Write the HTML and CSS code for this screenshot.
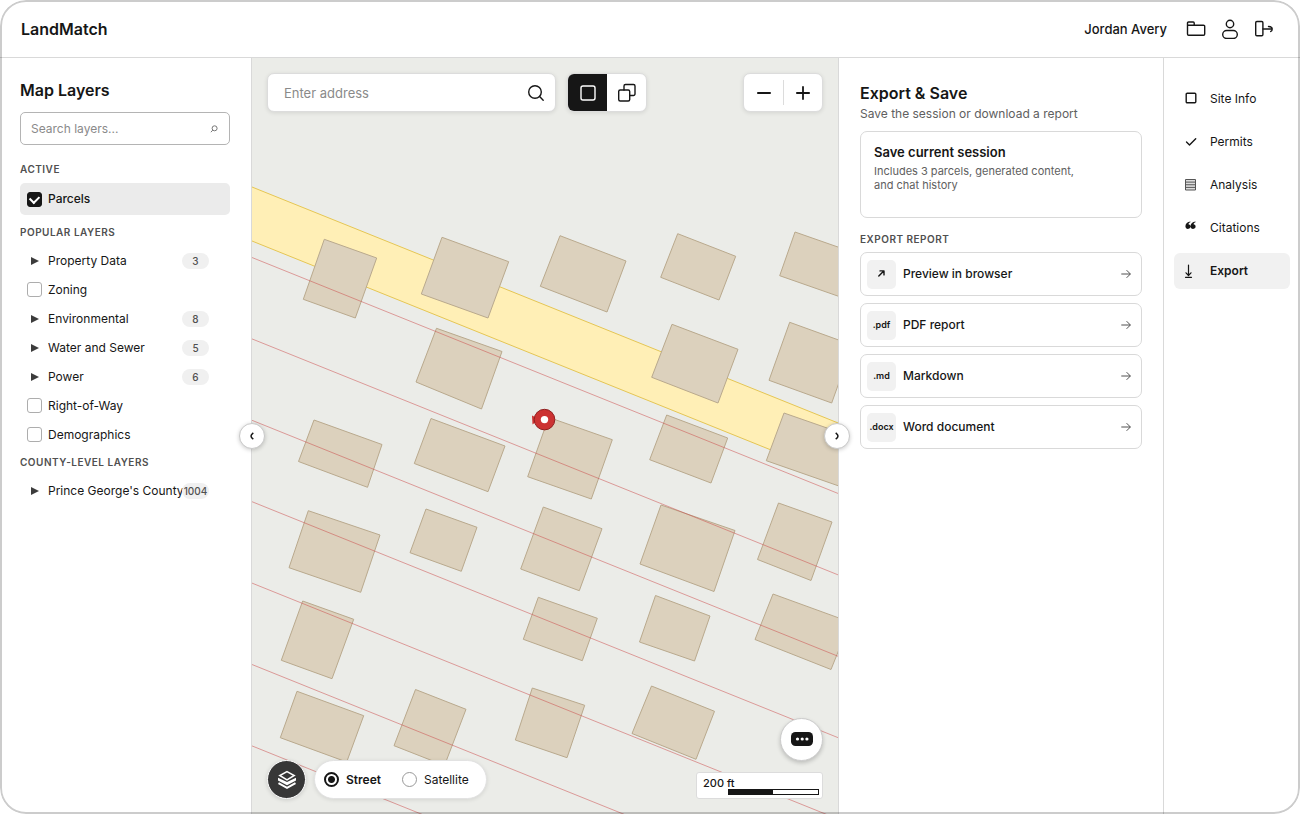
FILE: index.html
```html
<!DOCTYPE html>
<html lang="en">
<head>
<meta charset="utf-8">
<title>LandMatch</title>
<link rel="stylesheet" href="styles.css">
</head>
<body>
<div class="app">
  <header class="topbar">
    <h1 class="brand">LandMatch</h1>
    <div class="account">
      <span class="user-name">Jordan Avery</span>
      <button class="icon-btn" aria-label="Projects">
        <svg width="20" height="20" viewBox="0 0 20 20" class="line"><path d="M1.500 6.200V4a1 1 0 0 1 1-1h4.700a1 1 0 0 1 1 1v2.200M2.500 6.200h15a1.200 1.200 0 0 1 1.200 1.200v7.700a1.200 1.200 0 0 1-1.200 1.200h-14.800a1.200 1.200 0 0 1-1.200-1.200V6.200z"/></svg>
      </button>
      <button class="icon-btn" aria-label="Profile">
        <svg width="20" height="20" viewBox="0 0 20 20" class="line"><circle cx="10" cy="5" r="3.700"/><rect x="2.700" y="11.500" width="14.600" height="8" rx="4"/></svg>
      </button>
      <button class="icon-btn" aria-label="Sign out">
        <svg width="20" height="20" viewBox="0 0 20 20" class="line"><rect x="1.700" y="2.500" width="7.200" height="14.200" rx="1.200"/><path d="M9 10h9M14.500 7.500q3.700.2 3.700 2.500t-1.500 2.500"/></svg>
      </button>
    </div>
  </header>

  <main class="workspace">
    <aside class="sidebar">
      <h2 class="title">Map Layers</h2>
      <div class="layer-search">
        <input type="search" placeholder="Search layers..." aria-label="Search layers">
        <svg width="8" height="8" viewBox="0 0 8 8"><circle cx="4.600" cy="3.300" r="2.500"/><path d="M2.800 5.100L.9 7.200"/></svg>
      </div>

      <h3 class="section">Active</h3>
      <label class="layer layer-active"><input type="checkbox" class="check" checked><span class="layer-name">Parcels</span></label>

      <h3 class="section">Popular Layers</h3>
      <div class="layer-list">
        <button class="layer"><span class="caret"></span><span class="layer-name">Property Data</span><span class="count">3</span></button>
        <label class="layer"><input type="checkbox" class="check"><span class="layer-name">Zoning</span></label>
        <button class="layer"><span class="caret"></span><span class="layer-name">Environmental</span><span class="count">8</span></button>
        <button class="layer"><span class="caret"></span><span class="layer-name">Water and Sewer</span><span class="count">5</span></button>
        <button class="layer"><span class="caret"></span><span class="layer-name">Power</span><span class="count">6</span></button>
        <label class="layer"><input type="checkbox" class="check"><span class="layer-name">Right-of-Way</span></label>
        <label class="layer"><input type="checkbox" class="check"><span class="layer-name">Demographics</span></label>
      </div>

      <h3 class="section">County-Level Layers</h3>
      <div class="layer-list">
        <button class="layer"><span class="caret"></span><span class="layer-name">Prince George's County</span><span class="count">1004</span></button>
      </div>
    </aside>

    <section class="map" aria-label="Map">
      <svg class="map-canvas" aria-hidden="true">
        <g transform="translate(-252 -58)">
          <path class="road" d="M212 170.900L1052 509.100V563.100L212 224.900Z"/>
          <g class="buildings">
            <path d="M324.300 239.300L376.700 258L355.300 318L303.300 299.300Z"/>
            <path d="M442 237.300L508.700 261.700L488 318L421.300 294Z"/>
            <path d="M560 235.700L626 261L607 312L540.300 286.300Z"/>
            <path d="M677.700 233.700L735.700 256.300L719 300L660.700 277.300Z"/>
            <path d="M795 232L865 256.500L849.700 300.200L779.700 275.700Z"/>
            <path d="M436.500 328.300L502 351.500L481.500 409L416 382Z"/>
            <path d="M672 324.300L738 349.300L718 403L651.700 377.300Z"/>
            <path d="M789.700 322.300L852.400 345L831.700 403L769 380.300Z"/>
            <path d="M784 413L870 443L852.300 490.700L766.300 460.700Z"/>
            <path d="M314 420L382 444.500L367.500 487.300L298.500 461.500Z"/>
            <path d="M431 418.500L505 446L488 491.700L414.300 463.500Z"/>
            <path d="M548.700 417.400L612.300 439.700L591.300 499L527.700 476.700Z"/>
            <path d="M666.700 415L727.700 438L711 483L649.700 459.700Z"/>
            <path d="M308.300 510.700L380 535L360.700 592.300L289 567.700Z"/>
            <path d="M426 509L477 527.300L461.300 571.300L410 552.700Z"/>
            <path d="M543.300 507L602 528.700L579.300 590.700L520.700 569Z"/>
            <path d="M661 505L735 530.500L714 591.500L640 564Z"/>
            <path d="M778.500 503L832 522L811 580.500L757.500 559.500Z"/>
            <path d="M302.700 601L353.700 619.300L332 678.700L281.300 660.300Z"/>
            <path d="M538.300 597.300L597.300 618.300L582.300 660.700L523.300 639.300Z"/>
            <path d="M655.500 595.500L710 616L694.500 661L639.500 642Z"/>
            <path d="M773 594L850 622L831 669.500L755 639.500Z"/>
            <path d="M297 691.300L363.700 715.700L346.700 762L280.300 737.700Z"/>
            <path d="M415.500 689.500L466 709.300L444.500 765.500L394 745.700Z"/>
            <path d="M532.300 688L584.700 705.300L567 757.700L515.300 740Z"/>
            <path d="M651.500 686L714.500 711.300L696 759.300L632 733.500Z"/>
          </g>
          <path class="lot-lines" d="M212 241.400l840 338.200M212 322.800l840 338.200M212 404.200l840 338.200M212 485.600l840 338.200M212 567l840 338.200M212 648.400l840 338.200M212 729.800l840 338.200"/>
          <g class="pin">
            <path d="M532 415.500l3 1.500v5.500l-2.500 2z"/>
            <circle cx="544.500" cy="419.600" r="10.300"/>
            <circle class="pin-eye" cx="544.500" cy="419.600" r="3.700"/>
          </g>
        </g>
      </svg>

      <div class="map-top">
        <div class="address">
          <input type="text" placeholder="Enter address" aria-label="Enter address">
          <button class="icon-btn" aria-label="Search address">
            <svg width="18" height="18" viewBox="0 0 18 18" class="line"><circle cx="8" cy="8" r="6.300"/><path d="M12.600 12.600l3.600 3.600"/></svg>
          </button>
        </div>
        <div class="tool-group">
          <button class="tool tool-on" aria-label="Single select"><svg width="20" height="20" viewBox="0 0 20 20" class="line"><rect x="3" y="3" width="14" height="14" rx="2"/></svg></button>
          <button class="tool" aria-label="Multi select"><svg width="20" height="20" viewBox="0 0 20 20" class="line"><path d="M7 7V3a1.500 1.500 0 0 1 1.500-1.500h8a1.500 1.500 0 0 1 1.500 1.500v8a1.500 1.500 0 0 1-1.500 1.500H13"/><rect x="1.700" y="7" width="11" height="11" rx="1.500"/></svg></button>
        </div>
        <div class="tool-group zoom">
          <button class="tool" aria-label="Zoom out"><svg width="14" height="14" viewBox="0 0 14 14" class="line heavy"><path d="M.9 7h12.200"/></svg></button>
          <button class="tool" aria-label="Zoom in"><svg width="14" height="14" viewBox="0 0 14 14" class="line heavy"><path d="M.9 7h12.200M7 .9v12.200"/></svg></button>
        </div>
      </div>

      <div class="map-bottom">
        <button class="layers-btn" aria-label="Layers">
          <svg width="20" height="20" viewBox="0 0 20 20"><path class="edge" d="M1.500 13.200l8.500 4.600 8.500-4.600"/><path class="plate" d="M1 7.800L10 12l9-4.200v2.600L10 15.200 1 10.400z"/><path class="top" d="M10 1.600l7.200 3.900L10 9.800 2.800 5.500z"/></svg>
        </button>
        <div class="basemap">
          <label><input type="radio" name="base" checked><span>Street</span></label>
          <label><input type="radio" name="base"><span>Satellite</span></label>
        </div>
        <div class="map-info">
          <button class="chat" aria-label="Chat"><svg width="22" height="16" viewBox="0 0 22 16"><rect width="22" height="14" rx="4.500"/><g class="dots"><circle cx="6.500" cy="7" r="1.600"/><circle cx="11.200" cy="7" r="1.600"/><circle cx="15.900" cy="7" r="1.600"/></g></svg></button>
          <div class="scale"><span class="scale-text">200 ft</span><span class="scale-bar"></span></div>
        </div>
      </div>

      <button class="collapse collapse-left" aria-label="Collapse layers"><svg width="6" height="8" viewBox="0 0 6 8"><path d="M4.300.8Q2 2.500 2 4t2.300 3.200"/></svg></button>
      <button class="collapse collapse-right" aria-label="Collapse panel"><svg width="6" height="8" viewBox="0 0 6 8"><path d="M1.700.8Q4 2.500 4 4T1.700 7.200"/></svg></button>
    </section>

    <section class="panel">
      <h2 class="title">Export &amp; Save</h2>
      <p class="subtitle">Save the session or download a report</p>
      <button class="save-card">
        <span class="save-title">Save current session</span>
        <span class="save-text">Includes 3 parcels, generated content,<br>and chat history</span>
      </button>
      <h3 class="section">Export Report</h3>
      <div class="exports">
        <button class="export"><span class="tile"><svg width="7" height="8" viewBox="0 0 7 8" class="line"><path d="M.8 6L5.800 1M2 .9h4v4"/></svg></span><span class="export-name">Preview in browser</span><svg class="go" width="10" height="10" viewBox="0 0 10 10"><path d="M.3 5h9M5.600 1.200L9.400 5 5.600 8.800"/></svg></button>
        <button class="export"><span class="tile">.pdf</span><span class="export-name">PDF report</span><svg class="go" width="10" height="10" viewBox="0 0 10 10"><path d="M.3 5h9M5.600 1.200L9.400 5 5.600 8.800"/></svg></button>
        <button class="export"><span class="tile">.md</span><span class="export-name">Markdown</span><svg class="go" width="10" height="10" viewBox="0 0 10 10"><path d="M.3 5h9M5.600 1.200L9.400 5 5.600 8.800"/></svg></button>
        <button class="export"><span class="tile">.docx</span><span class="export-name">Word document</span><svg class="go" width="10" height="10" viewBox="0 0 10 10"><path d="M.3 5h9M5.600 1.200L9.400 5 5.600 8.800"/></svg></button>
      </div>
    </section>

    <nav class="tabs">
      <button class="tab"><svg width="14" height="14" viewBox="0 0 14 14" class="line"><rect x="2.200" y="1.200" width="9.600" height="9.600" rx="1"/></svg>Site Info</button>
      <button class="tab"><svg width="14" height="14" viewBox="0 0 14 14" class="line"><path d="M2.500 7l3 3L11.700 3.700"/></svg>Permits</button>
      <button class="tab"><svg width="14" height="14" viewBox="0 0 14 14" class="sheet"><path d="M1.500 1.500h10v10.500h-10zM1.500 4.100h10M1.500 6.750h10M1.500 9.400h10"/></svg>Analysis</button>
      <button class="tab"><svg width="14" height="14" viewBox="0 0 14 14" class="quote"><path d="M6.400.6C3.500 1 1.400 2.900 1.400 5.200c0 1.600 1.100 2.700 2.600 2.700s2.500-1 2.500-2.300c0-1.400-.9-2.300-2.100-2.300.3-1 .9-1.600 2-2zM11.500.6C8.600 1 6.500 2.900 6.500 5.200c0 1.600 1.100 2.700 2.600 2.700s2.500-1 2.500-2.300c0-1.400-.9-2.300-2.100-2.300.3-1 .9-1.600 2-2z"/></svg>Citations</button>
      <button class="tab tab-on"><svg width="14" height="14" viewBox="0 0 14 14" class="line thin"><path d="M4.500 1v10.500M2 8.800l2.500 2.700L7 8.800M1.500 13.300h6"/></svg>Export</button>
    </nav>
  </main>
</div>
</body>
</html>
```
FILE: styles.css
```css
* { box-sizing: border-box; }

body {
  margin: 0;
  background: #fff;
  color: #161616;
  font: 400 12px/16px Inter, "Liberation Sans", sans-serif;
}

h1, h2, h3, p { margin: 0; }

button, input {
  font: inherit;
  color: inherit;
}

button {
  margin: 0;
  padding: 0;
  border: 0;
  background: none;
  text-align: left;
  cursor: pointer;
}

svg { display: block; flex: none; }

.line {
  fill: none;
  stroke: currentColor;
  stroke-width: 1.4;
  stroke-linecap: round;
  stroke-linejoin: round;
}

.heavy { stroke-width: 1.8; }
.thin { stroke-width: 1.2; }

.app {
  position: relative;
  display: flex;
  flex-direction: column;
  min-height: 100vh;
  border-radius: 26px;
  overflow: hidden;
}

.app::after {
  content: "";
  position: absolute;
  inset: 0;
  border: 2px solid rgba(0, 0, 0, .2);
  border-radius: 26px;
  pointer-events: none;
}

/* Top bar */
.topbar {
  display: flex;
  align-items: center;
  justify-content: space-between;
  height: 58px;
  padding: 0 26px 0 21px;
  border-bottom: 1px solid #d9d9d9;
}

.brand, .title {
  font-size: 16px;
  line-height: 24px;
  font-weight: 600;
}

.account {
  display: flex;
  align-items: center;
  gap: 14px;
}

.user-name {
  margin-right: 5px;
  font-size: 13px;
  font-weight: 500;
}

.icon-btn { display: flex; }

.workspace {
  flex: 1;
  display: grid;
  grid-template-columns: 252px minmax(0, 1fr) 326px 136px;
}

/* Layer sidebar */
.sidebar {
  padding: 20px 21px 20px 20px;
  border-right: 1px solid #d9d9d9;
}

.layer-search {
  display: flex;
  align-items: center;
  height: 33px;
  margin: 10px 0 15px;
  padding: 0 11px 0 10px;
  border: 1px solid #b4b4b4;
  border-radius: 5px;
}

.layer-search input, .address input {
  flex: 1;
  min-width: 0;
  padding: 0;
  border: 0;
  outline: 0;
  background: none;
}

.layer-search svg {
  fill: none;
  stroke: #777;
  stroke-width: 1;
}

input::placeholder { color: #8a8a8a; opacity: 1; }

.section {
  color: #505050;
  font-size: 10px;
  line-height: 18px;
  font-weight: 600;
  letter-spacing: .05em;
  text-transform: uppercase;
}

.layer {
  display: flex;
  align-items: center;
  gap: 6px;
  width: 100%;
  height: 29px;
  padding: 0 21px 0 7px;
  cursor: pointer;
}

.layer-active {
  height: 32px;
  margin: 5px 0 8px;
  border-radius: 5px;
  background: #ebebeb;
  font-weight: 500;
}

.layer-list { padding: 5px 0 4px; }

.layer-name {
  flex: 1;
  min-width: 0;
  white-space: nowrap;
}

.check {
  appearance: none;
  flex: none;
  width: 15px;
  height: 15px;
  margin: 0;
  border: 1px solid #adadad;
  border-radius: 3px;
  background: #fff;
}

.check:checked {
  border-color: #161616;
  background: #161616;
}

.check:checked::after {
  content: "";
  display: block;
  width: 7px;
  height: 5px;
  margin: 2px auto 0;
  border: solid #fff;
  border-width: 0 0 2px 2px;
  transform: rotate(-45deg);
}

.caret {
  flex: none;
  width: 15px;
  padding-left: 4px;
}

.caret::before {
  content: "";
  display: block;
  width: 0;
  border-left: 8px solid #3c3c3c;
  border-top: 4px solid transparent;
  border-bottom: 4px solid transparent;
}

.count {
  display: flex;
  justify-content: center;
  flex: none;
  width: 27px;
  border-radius: 8px;
  background: #f0f0f0;
  color: #505050;
  font-size: 10px;
  font-weight: 500;
}

/* Map */
.map {
  position: relative;
  display: flex;
  flex-direction: column;
  justify-content: space-between;
  background: #ebece8;
}

.map-canvas {
  position: absolute;
  inset: 0;
  width: 100%;
  height: 100%;
}

.road { fill: #ffefb6; stroke: #e5c654; }

.buildings {
  fill: #dcd1bd;
  stroke: #b9a98d;
  stroke-linejoin: round;
}

.lot-lines {
  fill: none;
  stroke: #cc4747;
  stroke-opacity: .5;
}

.pin { fill: #cc3232; }
.pin circle { stroke: #8f1f1f; }
.pin .pin-eye { fill: #fff; stroke: none; }

.map-top, .map-bottom {
  position: relative;
  display: flex;
  padding: 15px;
}

.map-top { gap: 11px; }

.address, .tool-group {
  display: flex;
  align-items: center;
  height: 39px;
  border: 1px solid #dcdcdc;
  border-radius: 7px;
  background: #fff;
  box-shadow: 0 1px 4px rgba(0, 0, 0, .1);
}

.address {
  flex: 0 1 289px;
  min-width: 0;
  padding: 0 10px 0 16px;
  font-size: 13px;
}

.tool-group { overflow: hidden; }

.tool {
  display: flex;
  align-items: center;
  justify-content: center;
  width: 39px;
  height: 39px;
}

.tool-on { background: #161616; color: #fff; }

.zoom { margin-left: auto; }

.zoom .tool { height: 25px; }
.zoom .tool + .tool { border-left: 1px solid #dcdcdc; }

.map-bottom {
  align-items: flex-end;
  gap: 8px;
}

.layers-btn {
  display: flex;
  align-items: center;
  justify-content: center;
  width: 39px;
  height: 39px;
  border: 1px solid #fff;
  border-radius: 50%;
  background: #373737;
  box-shadow: 0 1px 4px rgba(0, 0, 0, .15);
}

.layers-btn .plate { fill: #fff; }
.layers-btn .edge { fill: none; stroke: #fff; stroke-width: 2; }
.layers-btn .top { fill: #373737; stroke: #fff; stroke-width: 1.5; }

.basemap {
  display: flex;
  align-items: center;
  gap: 21px;
  height: 39px;
  padding: 0 17px 0 9px;
  border: 1px solid #e2e2e2;
  border-radius: 20px;
  background: #fff;
  box-shadow: 0 1px 4px rgba(0, 0, 0, .1);
}

.basemap label {
  display: flex;
  align-items: center;
  gap: 7px;
  cursor: pointer;
}

.basemap label:has(:checked) { font-weight: 600; }

.basemap input {
  appearance: none;
  width: 15px;
  height: 15px;
  margin: 0;
  border: 1px solid #999;
  border-radius: 50%;
}

.basemap input:checked {
  border: 2px solid #161616;
  background: radial-gradient(circle, #161616 3px, #fff 4px);
}

.map-info {
  display: flex;
  flex-direction: column;
  align-items: flex-end;
  gap: 11px;
  margin-left: auto;
}

.chat {
  display: flex;
  align-items: center;
  justify-content: center;
  width: 43px;
  height: 43px;
  border: 1px solid #ccc;
  border-radius: 50%;
  background: #fff;
  fill: #161616;
  box-shadow: 0 2px 4px rgba(0, 0, 0, .2);
}

.dots { fill: #fff; }

.scale {
  display: flex;
  flex-direction: column;
  width: 127px;
  height: 27px;
  padding: 4px 3px 0 6px;
  border: 1px solid #dcdcdc;
  border-radius: 3px;
  background: #fff;
  font-size: 11px;
  line-height: 12px;
  font-weight: 500;
}

.scale-bar {
  align-self: flex-end;
  width: 91px;
  height: 6px;
  border: 1px solid #161616;
  background: linear-gradient(90deg, #161616 50%, #fff 50%);
}

.collapse {
  position: absolute;
  top: 50%;
  display: flex;
  align-items: center;
  justify-content: center;
  width: 26px;
  height: 26px;
  margin-top: -13px;
  border: 1px solid #c9c9c9;
  border-radius: 50%;
  background: #fff;
  box-shadow: 0 1px 4px rgba(0, 0, 0, .2);
}

.collapse svg { fill: none; stroke: #161616; stroke-width: 1.5; }
.collapse-left { left: -13px; }
.collapse-right { right: -12px; z-index: 1; }

/* Export panel */
.panel {
  padding: 23px 21px;
  border-left: 1px solid #d9d9d9;
  border-right: 1px solid #d9d9d9;
}

.subtitle { line-height: 18px; color: #606060; }

.save-card {
  display: flex;
  flex-direction: column;
  gap: 4px;
  width: 100%;
  min-height: 87px;
  margin: 8px 0 12px;
  padding: 12px 13px;
  border: 1px solid #d9d9d9;
  border-radius: 7px;
}

.save-title { font-size: 13px; font-weight: 600; }

.save-text {
  color: #606060;
  font-size: 11px;
  line-height: 14px;
}

.exports {
  display: flex;
  flex-direction: column;
  gap: 7px;
  padding-top: 4px;
}

.export {
  display: flex;
  align-items: center;
  gap: 7px;
  height: 44px;
  padding: 0 10px 0 6px;
  border: 1px solid #d9d9d9;
  border-radius: 7px;
  font-weight: 500;
}

.tile {
  display: flex;
  align-items: center;
  justify-content: center;
  width: 29px;
  height: 29px;
  border-radius: 5px;
  background: #f1f1f1;
  font-size: 9px;
  font-weight: 600;
}

.export-name { flex: 1; }

.go { fill: none; stroke: #505050; }

/* Section tabs */
.tabs {
  display: flex;
  flex-direction: column;
  gap: 7px;
  padding: 23px 10px;
}

.tab {
  display: flex;
  align-items: center;
  gap: 12px;
  height: 36px;
  padding: 0 10px;
  border-radius: 6px;
}

.tab-on { background: #f1f1f1; font-weight: 600; }

.sheet { fill: #ddd; stroke: #555; }
.quote { fill: #161616; }
```
